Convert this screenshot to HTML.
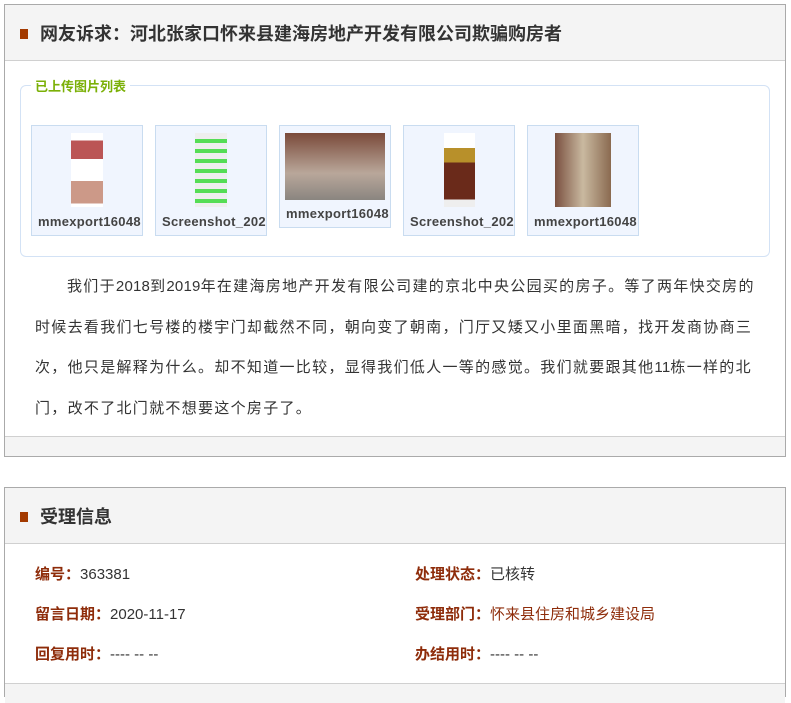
<!DOCTYPE html>
<html><head><meta charset="utf-8">
<style>
*{margin:0;padding:0;box-sizing:border-box}
body{width:791px;height:689px;background:#fff;font-family:"Liberation Sans","Microsoft YaHei","Noto Sans CJK SC",sans-serif;position:relative;overflow:hidden;color:#333}
.panel{position:absolute;left:4px;width:782px;border:1px solid #aaa}
.hd{background:#f4f4f4;border-bottom:1px solid #d0d0d0;position:relative}
.hd .sq{position:absolute;left:15px;width:8px;height:10px;background:#a33a00}
.hd h2{position:absolute;left:35px;font-size:18px;font-weight:bold;color:#333;white-space:nowrap}
fieldset{position:absolute;left:15px;top:71px;width:750px;height:181px;border:1px solid #d3e2f5;border-radius:6px}
legend{margin-left:10px;padding:0 4px;font-size:13px;font-weight:bold;color:#7bb007}
.th{position:absolute;width:112px;height:111px;background:#f0f5fe;border:1px solid #c9dcf0}
.th .im{position:absolute;top:7px}
.th .t{position:absolute;left:0;right:0;bottom:6px;text-align:left;font-size:13px;font-weight:bold;letter-spacing:0.3px;color:#444;white-space:nowrap;overflow:hidden;padding:0 7px 0 6px}
p{position:absolute;left:30px;top:262px;width:760px;font-size:15px;letter-spacing:1.3px;line-height:40.5px;text-indent:32px;color:#333;white-space:nowrap}
p .d{letter-spacing:0.2px}
.ft{position:absolute;left:0;right:0;background:#f4f4f4;border-top:1px solid #d0d0d0}
.row{position:absolute;font-size:15px;color:#333;white-space:nowrap}
.row b{color:#8e2c0a}
</style></head><body>
<div class="panel" style="top:4px;height:453px">
 <div class="hd" style="height:56px"><div class="sq" style="top:24px"></div><h2 style="top:15px">网友诉求：河北张家口怀来县建海房地产开发有限公司欺骗购房者</h2></div>
 <fieldset><legend>已上传图片列表</legend></fieldset>
 <div class="th" style="left:26px;top:120px"><div class="im" style="left:39px;width:32px;height:74px;background:linear-gradient(#fff 0 10%,#b55 10% 35%,#fff 35% 65%,#c98 65% 95%,#fff 95%)"></div><div class="t">mmexport16048</div></div>
 <div class="th" style="left:150px;top:120px"><div class="im" style="left:39px;width:32px;height:74px;background:repeating-linear-gradient(#eee 0 6px,#5d5 6px 10px)"></div><div class="t">Screenshot_2020</div></div>
 <div class="th" style="left:274px;top:120px;height:103px"><div class="im" style="left:5px;width:100px;height:67px;background:linear-gradient(#7a4a3a,#b9a79a 60%,#8a8580)"></div><div class="t">mmexport16048</div></div>
 <div class="th" style="left:398px;top:120px"><div class="im" style="left:40px;width:31px;height:74px;background:linear-gradient(#fff 0 20%,#b8902a 20% 40%,#6a2a1a 40% 90%,#eee 90%)"></div><div class="t">Screenshot_2020</div></div>
 <div class="th" style="left:522px;top:120px"><div class="im" style="left:27px;width:56px;height:74px;background:linear-gradient(90deg,#7a5040,#c9b9a0 50%,#8a6a50)"></div><div class="t">mmexport16048</div></div>
 <p>我们于<span class="d">2018</span>到<span class="d">2019</span>年在建海房地产开发有限公司建的京北中央公园买的房子。等了两年快交房的<br>时候去看我们七号楼的楼宇门却截然不同，朝向变了朝南，门厅又矮又小里面黑暗，找开发商协商三<br>次，他只是解释为什么。却不知道一比较，显得我们低人一等的感觉。我们就要跟其他<span class="d">11</span>栋一样的北<br>门，改不了北门就不想要这个房子了。</p>
 <div class="ft" style="top:431px;height:20px"></div>
</div>
<div class="panel" style="top:487px;height:210px">
 <div class="hd" style="height:56px"><div class="sq" style="top:24px"></div><h2 style="top:15px">受理信息</h2></div>
 <div class="row" style="left:30px;top:75px"><b>编号：</b>363381</div>
 <div class="row" style="left:410px;top:75px"><b>处理状态：</b>已核转</div>
 <div class="row" style="left:30px;top:115px"><b>留言日期：</b>2020-11-17</div>
 <div class="row" style="left:410px;top:115px"><b>受理部门：</b><span style="color:#8e2c0a">怀来县住房和城乡建设局</span></div>
 <div class="row" style="left:30px;top:155px"><b>回复用时：</b>---- -- --</div>
 <div class="row" style="left:410px;top:155px"><b>办结用时：</b>---- -- --</div>
 <div class="ft" style="top:195px;height:20px"></div>
</div>
</body></html>
